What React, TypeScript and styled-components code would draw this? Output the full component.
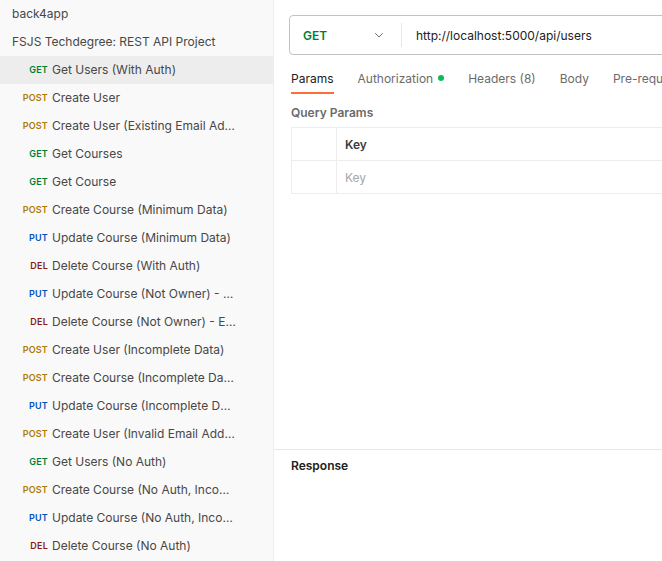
import styled, { createGlobalStyle } from 'styled-components'

const GlobalStyle = createGlobalStyle`
  html, body {
    margin: 0;
    padding: 0;
    overflow: hidden;
    background: #ffffff;
    font-family: Inter, "Noto Sans", "Liberation Sans", sans-serif;
  }
`

type Method = 'GET' | 'POST' | 'PUT' | 'DEL'

const METHOD_COLORS: Record<Method, string> = {
  GET: '#007f31',
  POST: '#ad7a03',
  PUT: '#0053b8',
  DEL: '#8e1a10',
}

const requests: { method: Method; name: string; active?: boolean }[] = [
  { method: 'GET', name: 'Get Users (With Auth)', active: true },
  { method: 'POST', name: 'Create User' },
  { method: 'POST', name: 'Create User (Existing Email Address)' },
  { method: 'GET', name: 'Get Courses' },
  { method: 'GET', name: 'Get Course' },
  { method: 'POST', name: 'Create Course (Minimum Data)' },
  { method: 'PUT', name: 'Update Course (Minimum Data)' },
  { method: 'DEL', name: 'Delete Course (With Auth)' },
  { method: 'PUT', name: 'Update Course (Not Owner) - Error' },
  { method: 'DEL', name: 'Delete Course (Not Owner) - Error' },
  { method: 'POST', name: 'Create User (Incomplete Data)' },
  { method: 'POST', name: 'Create Course (Incomplete Data)' },
  { method: 'PUT', name: 'Update Course (Incomplete Data)' },
  { method: 'POST', name: 'Create User (Invalid Email Address)' },
  { method: 'GET', name: 'Get Users (No Auth)' },
  { method: 'POST', name: 'Create Course (No Auth, Incomplete)' },
  { method: 'PUT', name: 'Update Course (No Auth, Incomplete)' },
  { method: 'DEL', name: 'Delete Course (No Auth)' },
]

const tabs = ['Params', 'Authorization', 'Headers (8)', 'Body', 'Pre-request Script']

const Shell = styled.div`
  display: grid;
  grid-template-columns: 274px 1fr;
  width: 100vw;
  height: 100vh;
  overflow: hidden;
`

const Sidebar = styled.aside`
  background: #f9f9f9;
  border-right: 1px solid #ededed;
  overflow: hidden;
`

const FolderRow = styled.div`
  height: 28px;
  box-sizing: border-box;
  padding: 0 0 2px 12px;
  display: flex;
  align-items: center;
  font-size: 12px;
  color: #474747;
  white-space: nowrap;
`

const RequestRow = styled.div<{ $active?: boolean }>`
  height: 28px;
  box-sizing: border-box;
  display: flex;
  align-items: center;
  gap: 4px;
  padding: 0 36px 2px 18px;
  background: ${(p) => (p.$active ? '#ededed' : 'transparent')};
  font-size: 12px;
  color: #474747;
`

const MethodTag = styled.span<{ $method: Method }>`
  flex: none;
  width: 30px;
  text-align: right;
  font-size: 9px;
  font-weight: 600;
  letter-spacing: 0.2px;
  color: ${(p) => METHOD_COLORS[p.$method]};
`

const RequestName = styled.span`
  flex: 1;
  min-width: 0;
  overflow: hidden;
  white-space: nowrap;
  text-overflow: ellipsis;
`

const Main = styled.main`
  display: flex;
  flex-direction: column;
  min-width: 0;
  overflow: hidden;
`

const UrlBar = styled.div`
  display: flex;
  align-items: center;
  height: 40px;
  width: 520px;
  margin: 15px 0 0 15px;
  border: 1px solid #c2c2c2;
  border-radius: 4px;
  box-sizing: border-box;
`

const MethodSelect = styled.div`
  display: flex;
  align-items: center;
  justify-content: space-between;
  width: 112px;
  box-sizing: border-box;
  padding: 0 17px 0 13px;
  height: 24px;
  border-right: 1px solid #e6e6e6;
  font-size: 12px;
  font-weight: 600;
  color: #007f31;
`

const UrlText = styled.span`
  padding-left: 14px;
  font-size: 12px;
  color: #212121;
  white-space: nowrap;
`

const TabRow = styled.div`
  display: flex;
  gap: 24px;
  margin: 9px 0 0 17px;
  white-space: nowrap;
`

const Tab = styled.div<{ $active?: boolean }>`
  display: flex;
  align-items: center;
  gap: 5px;
  height: 28px;
  font-size: 12px;
  color: ${(p) => (p.$active ? '#212121' : '#6b6b6b')};
  border-bottom: 2px solid ${(p) => (p.$active ? '#ff6c37' : 'transparent')};
`

const Dot = styled.span`
  width: 6px;
  height: 6px;
  border-radius: 50%;
  background: #0cbb52;
`

const SectionLabel = styled.div`
  margin: 11px 0 0 17px;
  font-size: 12px;
  font-weight: 600;
  color: #6b6b6b;
`

const ParamsTable = styled.div`
  display: grid;
  grid-template-columns: 45px 1fr;
  width: 500px;
  margin: 7px 0 0 17px;
  border-top: 1px solid #ededed;
  border-left: 1px solid #ededed;
`

const Cell = styled.div<{ $head?: boolean; $placeholder?: boolean }>`
  height: 32px;
  display: flex;
  align-items: center;
  padding-left: 8px;
  border-right: 1px solid #ededed;
  border-bottom: 1px solid #ededed;
  font-size: 12px;
  font-weight: ${(p) => (p.$head ? 600 : 400)};
  color: ${(p) => (p.$placeholder ? '#a6a6a6' : '#3b3b3b')};
`

const Spacer = styled.div`
  flex: 1;
`

const ResponsePane = styled.div`
  height: 112px;
  box-sizing: border-box;
  border-top: 1px solid #e6e6e6;
  padding: 8px 17px 0;
  font-size: 12px;
  font-weight: 600;
  color: #212121;
`

function Chevron() {
  return (
    <svg width="10" height="10" viewBox="0 0 10 10" fill="none">
      <path d="M1.5 3.5 L5 7 L8.5 3.5" stroke="#6b6b6b" strokeWidth="1" strokeLinecap="round" strokeLinejoin="round" />
    </svg>
  )
}

function App() {
  return (
    <>
      <GlobalStyle />
      <Shell>
        <Sidebar>
          <FolderRow>back4app</FolderRow>
          <FolderRow>FSJS Techdegree: REST API Project</FolderRow>
          {requests.map((r) => (
            <RequestRow key={r.name} $active={r.active}>
              <MethodTag $method={r.method}>{r.method}</MethodTag>
              <RequestName>{r.name}</RequestName>
            </RequestRow>
          ))}
        </Sidebar>

        <Main>
          <UrlBar>
            <MethodSelect>
              GET
              <Chevron />
            </MethodSelect>
            <UrlText>http://localhost:5000/api/users</UrlText>
          </UrlBar>

          <TabRow>
            {tabs.map((t, i) => (
              <Tab key={t} $active={i === 0}>
                {t}
                {t === 'Authorization' && <Dot />}
              </Tab>
            ))}
          </TabRow>

          <SectionLabel>Query Params</SectionLabel>
          <ParamsTable>
            <Cell />
            <Cell $head>Key</Cell>
            <Cell />
            <Cell $placeholder>Key</Cell>
          </ParamsTable>

          <Spacer />
          <ResponsePane>Response</ResponsePane>
        </Main>
      </Shell>
    </>
  )
}

export default App
